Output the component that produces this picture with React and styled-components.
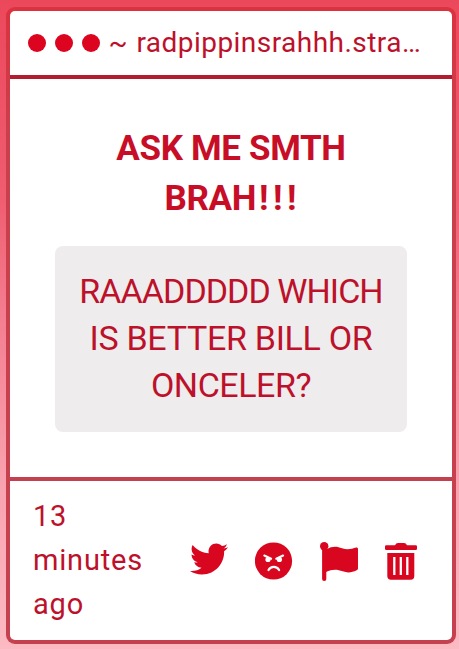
import React from 'react';
import styled, { createGlobalStyle } from 'styled-components';
import { FaTwitter } from 'react-icons/fa';

const GlobalStyle = createGlobalStyle`
  * {
    box-sizing: border-box;
  }

  body {
    margin: 0;
    font-family: Roboto, "Liberation Sans", sans-serif;
    color: #bd112b;
  }
`

const Page = styled.div`
  height: 649px;
  padding: 7px 3px 5px 6px;
  background: linear-gradient(#ec485c 0%, #f05c70 30%, #f48092 50%, #f9a3b0 75%, #fcbac3 100%);
`

const Frame = styled.div`
  height: 637px;
  padding: 4px;
  border-radius: 9px;
  background: linear-gradient(#db323f, #cb3f4c 20%, #c5414f);
`

const Card = styled.div`
  display: flex;
  flex-direction: column;
  height: 100%;
  border-radius: 5px;
  overflow: hidden;
  background: #fff;
`

const Header = styled.header`
  display: flex;
  align-items: center;
  height: 68px;
  padding: 0 18px 0 17.5px;
  border-bottom: 4px solid #b31b2f;
`

const Dot = styled.span`
  flex: none;
  width: 18.5px;
  height: 18.5px;
  margin-right: 8.5px;
  border-radius: 50%;
  background: #dc041f;
`

const Site = styled.span`
  flex: 1;
  min-width: 0;
  padding-bottom: 2px;
  font-size: 28px;
  letter-spacing: 0.46px;
  word-spacing: 1px;
  white-space: nowrap;
`

const Body = styled.main`
  display: flex;
  flex-direction: column;
  align-items: center;
  height: 398px;
  padding-top: 45px;
`

const Title = styled.h1`
  width: 300px;
  margin: 0;
  font-size: 35px;
  font-weight: 700;
  line-height: 50px;
  text-align: center;
  color: #c80d27;
`

const Message = styled.div`
  width: 352px;
  height: 186px;
  margin-top: 22px;
  padding: 22px 0;
  border-radius: 8px;
  background: #eeecec;
  font-size: 34px;
  line-height: 47px;
  text-align: center;
  white-space: nowrap;
`

const Line = styled.span`
  display: block;
  letter-spacing: ${props => props.$spacing}px;
`

const Marks = styled.span`
  margin-left: 3px;
  letter-spacing: 4.5px;
  margin-right: -3.5px;
`

const Footer = styled.footer`
  display: flex;
  align-items: center;
  justify-content: space-between;
  flex: 1;
  padding: 1px 35px 0 23px;
  border-top: 4px solid #c3414f;
`

const Time = styled.div`
  width: 130px;
  padding-bottom: 2px;
  font-size: 29px;
  line-height: 44px;
  letter-spacing: 0.8px;
`

const Actions = styled.div`
  display: flex;
  align-items: center;
  gap: 27px;
  color: #d8061f;

  svg {
    display: block;
    flex: none;
  }
`

const TwitterIcon = styled(FaTwitter)`
  margin-bottom: 4px;
`

const AngryIcon = () => (
  <svg width="38" height="38" viewBox="0 0 38 38">
    <circle cx="18.5" cy="19" r="18.6" fill="currentColor" />
    <g fill="none" stroke="#fff" strokeLinecap="round" strokeLinejoin="round">
      <path d="M9.3 13.5l6.8 3.2M28.1 13.5l-6.8 3.2" strokeWidth="2.1" />
      <path d="M13.5 28c2.3-4.1 8.3-4.1 10.6 0" strokeWidth="2.2" />
    </g>
    <circle cx="13" cy="17.5" r="2.6" fill="#fff" />
    <circle cx="24.4" cy="17.5" r="2.6" fill="#fff" />
  </svg>
)

const FlagIcon = () => (
  <svg width="38" height="39" viewBox="0 0 38 39" fill="currentColor">
    <circle cx="4.2" cy="4.3" r="4.2" />
    <rect x="2.1" y="3" width="4.2" height="36" rx="2" />
    <path d="M6 7.2C13 3.7 17 4.2 22 6.3c5 1.7 10 .7 14.2-.7Q38 5 38 7v19.5q0 1.2-1.3 1.8c-5 2.3-9 2.8-14 1C17 27 12 27 6 30z" />
  </svg>
)

const TrashIcon = () => (
  <svg width="32" height="37" viewBox="0 0 32 37">
    <path d="M1.3 2.3H10Q11 0 13 0h6q2 0 3 2.3h8.7Q32 2.3 32 3.6v2.1Q32 7 30.7 7H1.3Q0 7 0 5.7V3.6Q0 2.3 1.3 2.3z" fill="currentColor" />
    <path d="M2.3 10h27v23q0 3.7-3.7 3.7H6q-3.7 0-3.7-3.7z" fill="currentColor" />
    <path d="M9.3 14v18M15.8 14v18M22.3 14v18" stroke="#fff" strokeWidth="2.3" />
  </svg>
)

const App = () => {
  return (
    <>
      <GlobalStyle />
      <Page>
        <Frame>
          <Card>
            <Header>
              <Dot />
              <Dot />
              <Dot />
              <Site>~ radpippinsrahhh.stra…</Site>
            </Header>
            <Body>
              <Title>
                <Line $spacing={-0.35}>ASK ME SMTH</Line>
                <Line $spacing={-0.35}>BRAH<Marks>!!!</Marks></Line>
              </Title>
              <Message>
                <Line $spacing={-0.95}>RAAADDDDD WHICH</Line>
                <Line $spacing={-0.3}>IS BETTER BILL OR</Line>
                <Line $spacing={-0.45}>ONCELER?</Line>
              </Message>
            </Body>
            <Footer>
              <Time>13<br />minutes<br />ago</Time>
              <Actions>
                <TwitterIcon size={38} />
                <AngryIcon />
                <FlagIcon />
                <TrashIcon />
              </Actions>
            </Footer>
          </Card>
        </Frame>
      </Page>
    </>
  )
}

export default App;
